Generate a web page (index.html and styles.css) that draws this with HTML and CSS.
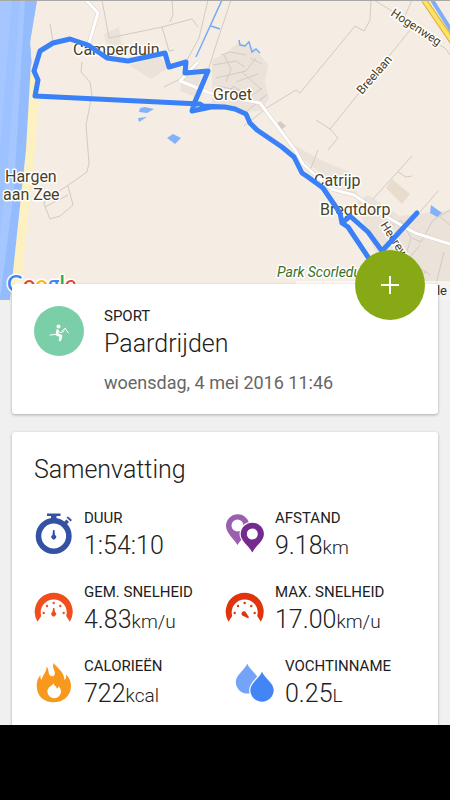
FILE: index.html
```html
<!DOCTYPE html>
<html lang="nl">
<head>
    <meta charset="UTF-8" />
    <meta name="viewport" content="width=device-width, initial-scale=1.0"/>
    <title>Paardrijden</title>
    <link rel="stylesheet" href="styles.css">
</head>
<body>
    <main class="content">
        <svg class="map" viewBox="0 0 450 300" preserveAspectRatio="xMidYMin slice" role="img" aria-label="Route">
            <rect width="450" height="300" fill="#f5ede4"/>
            <!-- sea and beach -->
            <path d="M0 0H37L30 42L34 100L26 200L10 300H0Z" fill="#a5c6ff"/>
            <path d="M25 0H37L30 42L32 70L26 150L10 300H0L14 190Z" fill="#94bcfd"/>
            <path d="M12 0H20L9 150L0 240V150Z" fill="#9ec2ff"/>
            <path d="M31 62L39 98L35 150L22 275L20 300H10L26 150Z" fill="#fdf0c1"/>
            <!-- built-up areas -->
            <g fill="#ebe3da">
                <path d="M104 34L119 27L121 42L130 48L108 52Z"/>
                <path d="M129 65L160 57L168 68L151 79Z"/>
                <path d="M182 74L202 73L195 97L180 91Z"/>
                <path d="M225 54L239 42L257 50L268 65L265 83L269 98L262 111L240 112L212 108L212 60Z"/>
                <path d="M295 145L308 153L325 162L350 172L358 196L352 195L300 158Z"/>
                <path d="M355 203L368 195L400 216L450 210V300H400L374 248Z"/>
            </g>
            <path d="M392 179L410 194L402 204L386 188Z" fill="#e8ddcd"/>
            <path d="M276 125L280 121L286 126L281 130Z" fill="#d4cbc3"/>
            <!-- minor roads -->
            <g fill="none" stroke="#d3cbc3" stroke-width="1">
                <path d="M50 24L53 41M102 0L109 38L162 27L192 19L198 27"/>
                <path d="M162 27L169 51L174 50M172 0L173 15L170 22"/>
                <path d="M82 62L81 72L90 82L92 95L86 125L89 163L87 172L67 186L45 200L44 204L50 219L60 216L73 205L68 186M45 207L68 195"/>
                <path d="M208 0L199 38L187 60M164 87L178 80M231 0L215 48L208 71"/>
                <path d="M371 0L370 20L364 31L355 26L300 93L296 90L268 107L244 126"/>
                <path d="M374 0L405 19M412 0L404 18L411 29L330 129L316 120M330 129L338 138L328 150M411 29L445 48L450 55"/>
                <path d="M412 156L373 199M398 172L406 177L412 176M438 191L420 212M318 150L311 168"/>
                <path d="M221 55L230 52L246 55M213 65L236 61L245 67M224 55L231 69L226 82M216 78L246 71L256 58M236 82L258 74M250 58L262 64M242 72L262 90M218 86L246 92M228 95L233 86L246 94M247 99L262 88M260 99L267 95M246 112L263 98"/>
                <path d="M384 230L401 220L411 238L405 258L430 275M412 238L421 242L433 220L450 210M406 262L420 245M432 300L444 252M438 215L450 225M414 290L426 270"/>
            </g>
            <!-- main roads -->
            <g fill="none" stroke-linejoin="round">
                <g stroke="#d6cec6" stroke-width="4">
                    <path d="M86 0L98 13L88 46"/>
                    <path d="M198 62L180 81L210 93L260 103L295 150L303 164L331 189L354 195L380 213L415 233L450 244"/>
                </g>
                <g stroke="#fff" stroke-width="3">
                    <path d="M86 0L98 13L88 46"/>
                    <path d="M198 62L180 81L210 93L260 103L295 150L303 164L331 189L354 195L380 213L415 233L450 244"/>
                </g>
                <path d="M432 0L454 35" stroke="#7eaefa" stroke-width="4"/>
                <path d="M424 0L454 44" stroke="#d8ae34" stroke-width="6"/>
                <path d="M424 0L454 44" stroke="#ffe168" stroke-width="4"/>
            </g>
            <!-- water -->
            <path d="M222 0L196 57M211 26L220 29M239 40L240 45L245 46L249 42L252 52L256 49L260 53" fill="none" stroke="#74aaf8" stroke-width="1.5"/>
            <path d="M140 108L145 107L154 109L147 113L139 112ZM138 118L147 117L139 122ZM167 138L173 134L181 138L175 144ZM431 205L442 213L437 217L430 213Z" fill="#83b2fb"/>
            <!-- place names -->
            <g class="map-text">
                <text x="73" y="55">Camperduin</text>
                <text x="213" y="100">Groet</text>
                <text x="5" y="182">Hargen</text>
                <text x="3" y="200">aan Zee</text>
                <text x="314" y="186">Catrijp</text>
                <text x="320" y="215">Bregtdorp</text>
                <text class="map-park" x="277" y="277">Park Scorleduin</text>
                <g class="map-street">
                    <text transform="translate(362 95) rotate(-49)">Breelaan</text>
                    <text transform="translate(390 15) rotate(33)">Hogenweg</text>
                    <text transform="translate(380 225) rotate(57)">Heereweg</text>
                </g>
            </g>
            <path d="M296 281H450V300H296Z" fill="#fff" fill-opacity=".6"/>
            <text class="map-terms" x="447" y="295">Gebruiksvoorwaarden Google</text>
            <text class="map-logo" x="7" y="292"><tspan fill="#4285f4">G</tspan><tspan fill="#ea4335">o</tspan><tspan fill="#fbbc05">o</tspan><tspan fill="#4285f4">g</tspan><tspan fill="#34a853">l</tspan><tspan fill="#ea4335">e</tspan></text>
            <!-- tracked route -->
            <path d="M417 213L382 251L368 232L350 216L342 223L348 227L370 260M342 223L340 213L323 188L308 177L302 173L294 157L282 147L257 130L250 123L246 114L235 109L225 107L211 107L192 111L194 104L208 71L185 73L186 62L169 67L165 53L128 61L107 58L88 45L70 39L53 43L40 51L34 71L38 80L35 96L200 104L203 106L225 107" fill="none" stroke="#3a80f6" stroke-width="5" stroke-linejoin="round" stroke-linecap="round"/>
            <rect width="450" height="1" fill="#aaa8a6"/>
        </svg>

        <section class="card activity">
            <button class="add" type="button" aria-label="Toevoegen">
                <svg width="20" height="20" viewBox="0 0 20 20"><path d="M10 1V19M1 10H19" stroke="#fff" stroke-width="2"/></svg>
            </button>
            <div class="sport-icon">
                <svg width="50" height="50" viewBox="0 0 50 50" fill="none" stroke="#fff" stroke-linecap="round" stroke-linejoin="round">
                    <circle cx="24.500" cy="20.500" r="2" fill="#fff" stroke="none"/>
                    <path d="M23.500 24.500L23 28.500L27 30L26 34" stroke-width="2.600"/>
                    <path d="M24 25L27 27L30 25M28 25L31 22.500L34.500 27M31 23L32 22M16 29L22 28.500" stroke-width="1"/>
                </svg>
            </div>
            <div>
                <p class="label">SPORT</p>
                <h1 class="title">Paardrijden</h1>
                <p class="date">woensdag, 4 mei 2016 11:46</p>
            </div>
        </section>

        <section class="card summary">
            <h2 class="title">Samenvatting</h2>
            <div class="metrics">
                <div class="metric">
                    <svg class="icon" viewBox="0 0 40 44" fill="#3451a4">
                        <circle cx="19.700" cy="25" r="15.200" fill="none" stroke="#3451a4" stroke-width="5.600"/>
                        <path d="M13 2.500H26.500V5H22.500V9H17V5H13ZM30 11L32.500 8.500L35 11L32.500 13.500ZM32.500 6.500L34 5.500L38 9L36.500 10.500Z"/>
                        <path d="M19 19H20.500L21 24A2.400 2.400 0 1 1 18.500 24Z"/>
                    </svg>
                    <div>
                        <p class="label">DUUR</p>
                        <p class="value">1:54:10</p>
                    </div>
                </div>
                <div class="metric">
                    <svg class="icon" viewBox="0 0 40 44" fill-rule="evenodd">
                        <path d="M12.500 34C9 28 1 22 1 15A11.700 11.700 0 0 1 24.400 15C24.400 22 16 28 12.500 34ZM12.500 8.500A6 6 0 1 0 12.500 20.500A6 6 0 1 0 12.500 8.500Z" fill="#9b5fb0"/>
                        <path d="M27.300 41.500C24 35 15.700 30 15.700 23.300A11.600 11.600 0 0 1 38.900 23.300C38.900 30 30.500 35 27.300 41.500Z" fill="#fff" stroke="#fff" stroke-width="2.400"/>
                        <path d="M27.300 41.500C24 35 15.700 30 15.700 23.300A11.600 11.600 0 0 1 38.900 23.300C38.900 30 30.500 35 27.300 41.500ZM27.300 17.500A5.500 5.500 0 1 0 27.300 28.500A5.500 5.500 0 1 0 27.300 17.500Z" fill="#752a90"/>
                    </svg>
                    <div>
                        <p class="label">AFSTAND</p>
                        <p class="value">9.18<span class="unit">km</span></p>
                    </div>
                </div>
                <div class="metric">
                    <svg class="icon" viewBox="0 0 40 44" fill="#f04e1c">
                        <path d="M3.500 36.700A19 19 0 1 1 35.900 36.700L32.200 31A13 13 0 1 0 7.200 31Z"/>
                        <circle cx="9.700" cy="28" r="1.200"/><circle cx="13" cy="21" r="1.200"/><circle cx="19.700" cy="18" r="1.200"/><circle cx="26.300" cy="21" r="1.200"/><circle cx="29.700" cy="28" r="1.200"/>
                        <path d="M19 23H20.400L21 27A2.400 2.400 0 1 1 18.400 27Z"/>
                    </svg>
                    <div>
                        <p class="label">GEM. SNELHEID</p>
                        <p class="value">4.83<span class="unit">km/u</span></p>
                    </div>
                </div>
                <div class="metric">
                    <svg class="icon" viewBox="0 0 40 44" fill="#e0340f">
                        <path d="M3.500 36.700A19 19 0 1 1 35.900 36.700L32.200 31A13 13 0 1 0 7.200 31Z"/>
                        <circle cx="9.700" cy="28" r="1.200"/><circle cx="13" cy="21" r="1.200"/><circle cx="19.700" cy="18" r="1.200"/><circle cx="26.300" cy="21" r="1.200"/><circle cx="29.700" cy="28" r="1.200"/>
                        <path d="M21 27.500L24 32.200L23 33.200L18.300 31A2.400 2.400 0 1 1 21 27.500Z"/>
                    </svg>
                    <div>
                        <p class="label">MAX. SNELHEID</p>
                        <p class="value">17.00<span class="unit">km/u</span></p>
                    </div>
                </div>
                <div class="metric">
                    <svg class="icon" viewBox="0 0 40 44">
                        <path d="M19.700 4C22 8 30 12 30.500 21C32 20 32.500 18 32 15.500C35 18 37 22 37 27C37 37 29 43.300 19.700 43.300C10 43.300 2.700 37 2.700 27C2.700 22 4 19 6.500 16C6.300 18 6.500 20 7.500 21C9 15 13 13 12.500 7.500C15 10 14 14 16 16.500C17.500 18 20.500 17.500 20.800 15C21.300 11 17.500 9 19.700 4Z" fill="#f8981d"/>
                        <path d="M20 24C19 27 23 26.500 22.500 29.500C24 29.500 24.500 28.500 24.300 27C26 28.500 27 30 27 32.500A6.800 6.800 0 0 1 13.400 32.500C13.400 28 18 27 20 24Z" fill="#fff"/>
                    </svg>
                    <div>
                        <p class="label">CALORIEËN</p>
                        <p class="value">722<span class="unit">kcal</span></p>
                    </div>
                </div>
                <div class="metric metric-water">
                    <svg class="icon" viewBox="0 0 40 44">
                        <path d="M12.300 4.700C15 11 23.800 16 23.800 23A11.500 11.500 0 0 1 .8 23C.8 16 9.500 11 12.300 4.700Z" fill="#74a4fa"/>
                        <path d="M27 12.700C29.500 19 38.700 24 38.700 31A11.700 11.700 0 0 1 15.300 31C15.300 24 24.500 19 27 12.700Z" fill="#4285f4" stroke="#fff" stroke-width="2.400" paint-order="stroke"/>
                    </svg>
                    <div>
                        <p class="label">VOCHTINNAME</p>
                        <p class="value">0.25<span class="unit">L</span></p>
                    </div>
                </div>
            </div>
        </section>
    </main>
    <div class="system-bar"></div>
</body>
</html>
```
FILE: styles.css
```css
html,
body {
    margin: 0;
    height: 100%;
}
body {
    display: flex;
    flex-direction: column;
    background: #f0f0f0;
    color: #212121;
    font-family: Roboto, "Liberation Sans", sans-serif;
}
h1, h2, p {
    margin: 0;
}
.content {
    flex: 1;
    min-height: 0;
    overflow: hidden;
}
.system-bar {
    height: 75px;
    background: #000;
}

/* map */
.map {
    display: block;
    width: 100%;
    height: 300px;
}
.map-text {
    font-size: 16px;
    fill: #4b4126;
    stroke: #fff;
    stroke-width: 3px;
    stroke-linejoin: round;
    paint-order: stroke;
}
.map-street {
    font-size: 12px;
}
.map-park {
    font-size: 14px;
    font-style: italic;
    fill: #38702c;
}
.map-terms {
    font-size: 13px;
    text-anchor: end;
    fill: #333;
}
.map-logo {
    font-family: Lato, sans-serif;
    font-size: 22px;
    font-weight: 600;
    stroke: #fff;
    stroke-width: 3px;
    paint-order: stroke;
}

/* cards */
.card {
    position: relative;
    margin: 0 12px 18px;
    padding: 20px 22px;
    background: #fff;
    border-radius: 3px;
    box-shadow: 0 1px 3px rgba(0, 0, 0, 0.3);
}
.activity {
    display: flex;
    gap: 20px;
    margin-top: -16px;
    padding-top: 22px;
    padding-bottom: 18px;
}
.title {
    font-size: 25px;
    font-weight: 300;
    line-height: 36px;
}
.label {
    font-size: 15px;
    line-height: 20px;
}
.date {
    margin-top: 8px;
    color: #666;
    font-size: 18px;
    line-height: 26px;
}
.sport-icon {
    flex: none;
    width: 50px;
    height: 50px;
    border-radius: 50%;
    background: #7acfa9;
}
.sport-icon svg {
    display: block;
}
.add {
    position: absolute;
    top: -34px;
    right: 13px;
    display: flex;
    align-items: center;
    justify-content: center;
    width: 70px;
    height: 70px;
    padding: 0;
    border: 0;
    border-radius: 50%;
    background: #88a916;
}

/* summary */
.metrics {
    display: grid;
    grid-template-columns: 1fr 1fr;
    gap: 18px 0;
    margin-top: 20px;
}
.metric {
    display: flex;
    gap: 10px;
}
.metric-water {
    padding-left: 10px;
}
.icon {
    flex: none;
    width: 40px;
    height: 44px;
    margin-top: 3px;
}
.value {
    font-size: 25px;
    font-weight: 300;
    line-height: 36px;
}
.unit {
    font-size: 19px;
    line-height: 20px;
}
```
